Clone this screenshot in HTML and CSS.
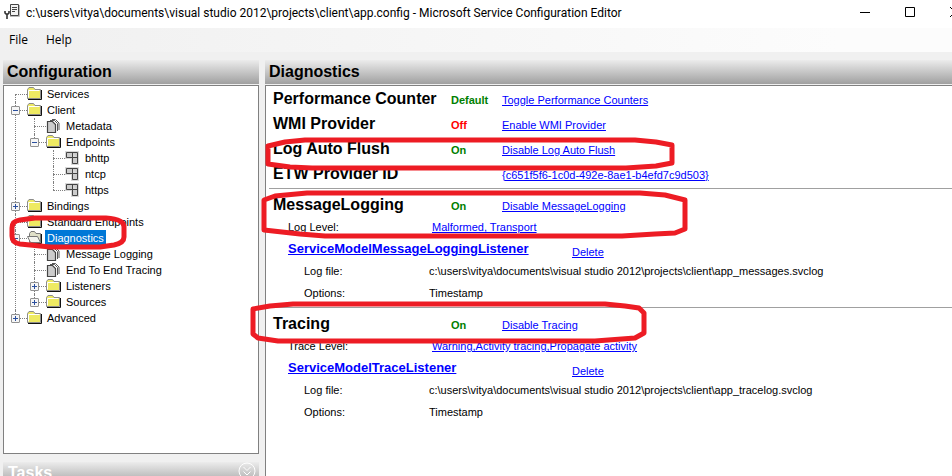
FILE: index.html
```html
<!DOCTYPE html>
<html lang="en">
<head>
<meta charset="utf-8">
<title>Microsoft Service Configuration Editor</title>
<link rel="stylesheet" href="styles.css">
</head>
<body>
<svg class="defs" aria-hidden="true">
  <defs>
    <symbol id="folder" viewBox="0 0 16 14">
      <path d="M.5 11.500V2.500L2 .5H6.500L8 2.500H13.500V11.500Z" fill="#eeea62" stroke="#8c8c8c"/>
      <path d="M1.500 10.500V3.500H12.500" fill="none" stroke="#fff"/>
      <path d="M1 12.500H14.500V3" fill="none" stroke="#111"/>
    </symbol>
    <symbol id="folder-open" viewBox="0 0 16 14">
      <path d="M2.500 11.500V2.500L4 .5H7.500L9 2.500H13.500V11.500Z" fill="#e0e0c8" stroke="#777"/>
      <path d="M3.500 11.500L.5 5.500H10.500L13.500 11.500Z" fill="#f4f4ee" stroke="#777"/>
      <path d="M2 12.500H14.500V3" fill="none" stroke="#111"/>
    </symbol>
    <symbol id="pages" viewBox="0 0 16 14">
      <path d="M6 .5H9.500L13 4V11" fill="none" stroke="#555"/>
      <path d="M4 1.500H8.500L11.500 4.500V12" fill="none" stroke="#555"/>
      <path d="M1.500 2.500H6.500L9.500 5.500V13.500H1.500Z" fill="#ccc" stroke="#444" stroke-width="1.200"/>
    </symbol>
    <symbol id="endpoint" viewBox="0 0 16 14">
      <path d="M0 0H14V14H6V8H0Z" fill="#d8d8d8"/>
      <path d="M1.500 1.500H12.500V12.500H7.500V6.500H1.500ZM7.500 1.500V6.500H12.500" fill="#ccc" stroke="#444"/>
    </symbol>
  </defs>
</svg>
<div class="window">
  <header class="titlebar">
    <svg class="app-icon" viewBox="0 0 16 16" aria-hidden="true">
      <path d="M6 12.500H15.500V1" fill="none" stroke="#bbb"/>
      <path d="M6.500 .5H14.500V11.500H6.500Z" fill="#f2f2f2" stroke="#444"/>
      <path d="M8 3.500H13M8 5.500H13M8 7.500H11" stroke="#444"/>
      <path d="M1 7V9L2 10H4L5 9V7M3 10V15" fill="none" stroke="#333" stroke-width="1.600"/>
    </svg>
    <h1 class="title">c:\users\vitya\documents\visual studio 2012\projects\client\app.config - Microsoft Service Configuration Editor</h1>
    <div class="controls">
      <button class="control" aria-label="Minimize"><svg viewBox="0 0 10 10"><path d="M0 5.500H10"/></svg></button>
      <button class="control" aria-label="Maximize"><svg viewBox="0 0 10 10"><path d="M.5 .5H9.500V9.500H.5Z"/></svg></button>
      <button class="control" aria-label="Close"><svg viewBox="0 0 10 10"><path d="M0 0L10 10M10 0L0 10"/></svg></button>
    </div>
  </header>
  <nav class="menubar"><button class="menu">File</button><button class="menu">Help</button></nav>
  <div class="workspace">
    <aside class="side">
      <h2 class="bar">Configuration</h2>
      <div class="tree-box">
        <ul class="tree">
          <li><div class="node"><span class="slot"></span><svg class="icon"><use href="#folder"/></svg><span class="label">Services</span></div></li>
          <li><div class="node"><button class="toggle" aria-label="Collapse Client"></button><svg class="icon"><use href="#folder"/></svg><span class="label">Client</span></div>
            <ul>
              <li><div class="node"><span class="slot"></span><svg class="icon"><use href="#pages"/></svg><span class="label">Metadata</span></div></li>
              <li><div class="node"><button class="toggle" aria-label="Collapse Endpoints"></button><svg class="icon"><use href="#folder"/></svg><span class="label">Endpoints</span></div>
                <ul>
                  <li><div class="node"><span class="slot"></span><svg class="icon"><use href="#endpoint"/></svg><span class="label">bhttp</span></div></li>
                  <li><div class="node"><span class="slot"></span><svg class="icon"><use href="#endpoint"/></svg><span class="label">ntcp</span></div></li>
                  <li><div class="node"><span class="slot"></span><svg class="icon"><use href="#endpoint"/></svg><span class="label">https</span></div></li>
                </ul>
              </li>
            </ul>
          </li>
          <li><div class="node"><button class="toggle plus" aria-label="Expand Bindings"></button><svg class="icon"><use href="#folder"/></svg><span class="label">Bindings</span></div></li>
          <li><div class="node"><span class="slot"></span><svg class="icon"><use href="#folder"/></svg><span class="label">Standard Endpoints</span></div></li>
          <li><div class="node"><button class="toggle" aria-label="Collapse Diagnostics"></button><svg class="icon"><use href="#folder-open"/></svg><span class="label selected">Diagnostics</span></div>
            <ul>
              <li><div class="node"><span class="slot"></span><svg class="icon"><use href="#pages"/></svg><span class="label">Message Logging</span></div></li>
              <li><div class="node"><span class="slot"></span><svg class="icon"><use href="#pages"/></svg><span class="label">End To End Tracing</span></div></li>
              <li><div class="node"><button class="toggle plus" aria-label="Expand Listeners"></button><svg class="icon"><use href="#folder"/></svg><span class="label">Listeners</span></div></li>
              <li><div class="node"><button class="toggle plus" aria-label="Expand Sources"></button><svg class="icon"><use href="#folder"/></svg><span class="label">Sources</span></div></li>
            </ul>
          </li>
          <li><div class="node"><button class="toggle plus" aria-label="Expand Advanced"></button><svg class="icon"><use href="#folder"/></svg><span class="label">Advanced</span></div></li>
        </ul>
      </div>
      <div class="bar tasks">
        <h2 class="tasks-title">Tasks</h2>
        <button class="chevron" aria-label="Expand tasks"><svg viewBox="0 0 18 18"><circle cx="9" cy="9" r="8"/><path d="M5.500 5L9 8.500L12.500 5M5.500 9.500L9 13L12.500 9.500"/></svg></button>
      </div>
    </aside>
    <main class="main">
      <h2 class="bar">Diagnostics</h2>
      <div class="detail">
        <section class="group">
          <div class="row"><h3>Performance Counter</h3><strong class="on">Default</strong><a href="#">Toggle Performance Counters</a></div>
          <div class="row"><h3>WMI Provider</h3><strong class="off">Off</strong><a href="#">Enable WMI Provider</a></div>
          <div class="row"><h3>Log Auto Flush</h3><strong class="on">On</strong><a href="#">Disable Log Auto Flush</a></div>
          <div class="row"><h3>ETW Provider ID</h3><span></span><a href="#">{c651f5f6-1c0d-492e-8ae1-b4efd7c9d503}</a></div>
        </section>
        <section class="group ruled">
          <div class="row"><h3>MessageLogging</h3><strong class="on">On</strong><a href="#">Disable MessageLogging</a></div>
          <div class="level"><span>Log Level:</span><a href="#">Malformed, Transport</a></div>
          <div class="listener"><a class="name" href="#">ServiceModelMessageLoggingListener</a><a href="#">Delete</a></div>
          <div class="field"><span>Log file:</span><span>c:\users\vitya\documents\visual studio 2012\projects\client\app_messages.svclog</span></div>
          <div class="field"><span>Options:</span><span>Timestamp</span></div>
        </section>
        <section class="group ruled">
          <div class="row"><h3>Tracing</h3><strong class="on">On</strong><a href="#">Disable Tracing</a></div>
          <div class="level"><span>Trace Level:</span><a href="#">Warning,Activity tracing,Propagate activity</a></div>
          <div class="listener"><a class="name" href="#">ServiceModelTraceListener</a><a href="#">Delete</a></div>
          <div class="field"><span>Log file:</span><span>c:\users\vitya\documents\visual studio 2012\projects\client\app_tracelog.svclog</span></div>
          <div class="field"><span>Options:</span><span>Timestamp</span></div>
        </section>
      </div>
    </main>
  </div>
  <svg class="marks" width="952" height="476" viewBox="0 0 952 476" aria-hidden="true">
    <path d="M12 228Q12 221 20 220L35 218H106Q124 219 124 227V237Q124 243 114 245L100 247H50L20 244Q12 243 12 236Z"/>
    <path d="M268 146L285 142L305 140H635L656 142L672 145V163L656 166L626 168H312L290 167L268 164Z"/>
    <path d="M264 200L275 196L307 193H640L665 195L685 200V229L675 233L655 234L622 236H325L300 234L264 230Z"/>
    <path d="M253 309L270 306L293 304H605L625 306L639 308L644 313V333L635 338L595 341H278L258 338L253 334Z"/>
  </svg>
</div>
</body>
</html>
```
FILE: styles.css
```css
* { box-sizing: border-box; }
body { margin: 0; overflow: hidden; background: #f0f0f0; color: #000; font: 11px/16px "Liberation Sans", Arial, sans-serif; }
h1, h2, h3, ul { margin: 0; padding: 0; }
button { margin: 0; padding: 0; border: 0; background: none; color: inherit; font: inherit; }
a { color: #00f; }
.defs { position: absolute; width: 0; height: 0; }

/* the window runs a little past the viewport, cutting the Tasks bar */
.window { position: relative; display: flex; flex-direction: column; height: calc(100vh + 10px); overflow: hidden; }

.titlebar { display: flex; align-items: center; height: 28px; padding-left: 4px; background: #fff; overflow: hidden; }
.app-icon { flex: none; width: 16px; height: 16px; margin-right: 6px; margin-bottom: 4px; }
.title { flex: 1; height: 26px; font: 12px/24px Roboto, "Open Sans", sans-serif; white-space: nowrap; }
.controls { display: flex; gap: 35px; height: 24px; margin-right: -8px; }
.control { display: flex; align-items: center; width: 10px; height: 20px; }
.control svg { width: 10px; height: 10px; fill: none; stroke: #000; overflow: visible; }

.menubar { display: flex; gap: 18px; height: 24px; padding-left: 9px; background: linear-gradient(90deg, #f0f0f0, #fcfcfc 88%); font: 12px/24px "Open Sans", "Noto Sans", sans-serif; }

.workspace { flex: 1; display: grid; grid-template-columns: 256px 1fr; gap: 6px; min-height: 0; padding: 8px 0 0 3px; }
.side, .main { display: flex; flex-direction: column; min-width: 0; }
.bar { flex: none; height: 24px; padding-left: 4px; background: linear-gradient(#ececec, #a0a0a0); font: bold 16px/24px "Liberation Sans", Arial, sans-serif; }

.tree-box { flex: 1; margin: 1px 0 8px; border: 1px solid #808080; background: #fff; }
.tree { padding-left: 7px; }
.tree ul { padding-left: 19px; }
.tree li { position: relative; list-style: none; }
.tree li::before { content: ""; position: absolute; left: 4px; top: 0; bottom: 0; border-left: 1px dotted #808080; }
.tree > li:first-child::before { top: 8px; }
.tree li:last-child::before { bottom: auto; height: 8px; }
.node { position: relative; display: flex; align-items: center; height: 16px; }
.node::before { content: ""; position: absolute; left: 4px; top: 8px; width: 12px; border-top: 1px dotted #808080; }
.slot { width: 9px; }
.toggle { position: relative; width: 9px; height: 9px; border: 1px solid #919191; border-radius: 1px; background: linear-gradient(90deg, #2b4f9e, #2b4f9e) center / 5px 1px no-repeat, #f6f6f6; }
.toggle.plus { background: linear-gradient(#2b4f9e, #2b4f9e) center / 5px 1px no-repeat, linear-gradient(#2b4f9e, #2b4f9e) center / 1px 5px no-repeat, #f6f6f6; }
.icon { position: relative; width: 16px; height: 14px; margin-left: 7px; }
.label { margin-left: 2px; padding: 0 2px; white-space: nowrap; }
.selected { background: #0078d7; color: #fff; }

.tasks { display: flex; justify-content: space-between; padding: 0 3px 0 5px; color: #fff; }
.tasks-title { font: bold 16px/22px "Liberation Sans", Arial, sans-serif; }
.chevron { width: 18px; height: 20px; }
.chevron svg { width: 18px; height: 18px; fill: none; stroke: #fff; }

.detail { flex: 1; margin-top: 1px; padding: 1px 0 0 3px; border: solid #808080; border-width: 1px 0 0 1px; background: #fff; white-space: nowrap; }
.group { padding-left: 4px; padding-bottom: 1px; }
.group.ruled { padding-top: 4px; padding-bottom: 3px; border-top: 1px solid #a0a0a0; }
.row { display: grid; grid-template-columns: 178px 51px 1fr; align-items: center; justify-items: start; height: 25px; }
.row h3 { height: 25px; font: bold 16px/24px "Liberation Sans", Arial, sans-serif; }
.on { color: #008000; }
.off { color: #f00; }
.level { display: grid; grid-template-columns: 144px 1fr; align-items: center; justify-items: start; height: 18px; padding-left: 15px; }
.listener { display: grid; grid-template-columns: 284px 1fr; align-items: end; justify-items: start; height: 24px; padding-left: 15px; }
.name { height: 20px; font: bold 13px/18px "Liberation Sans", Arial, sans-serif; }
.field { display: grid; grid-template-columns: 125px 1fr; align-items: center; height: 22px; padding-left: 31px; }

/* red marker loops lying over the panels */
.marks { position: absolute; left: 0; top: 0; pointer-events: none; fill: none; stroke: #ed1c24; stroke-width: 5; stroke-linejoin: round; }
```
